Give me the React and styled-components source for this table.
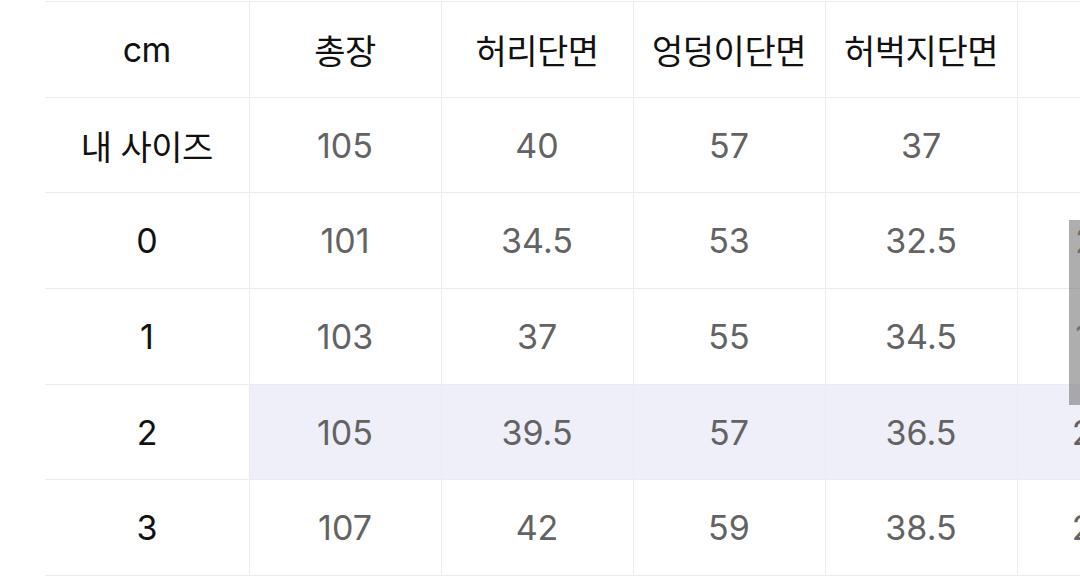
import styled, { createGlobalStyle } from "styled-components";

const GlobalStyle = createGlobalStyle`
  html, body {
    margin: 0;
    padding: 0;
    background: #fff;
    overflow: hidden;
  }
  body {
    font-family: "Inter", "Noto Sans CJK KR", sans-serif;
  }
`;

const columns = [204, 192, 192, 192, 192, 180];

const headers = ["cm", "총장", "허리단면", "엉덩이단면", "허벅지단면", ""];

const rows = [
  { label: "내 사이즈", values: ["105", "40", "57", "37", ""] },
  { label: "0", values: ["101", "34.5", "53", "32.5", "21.5"] },
  { label: "1", values: ["103", "37", "55", "34.5", "19.5"] },
  { label: "2", values: ["105", "39.5", "57", "36.5", "23.5"], active: true },
  { label: "3", values: ["107", "42", "59", "38.5", "24.5"] },
];

export default function App() {
  return (
    <>
      <GlobalStyle />
      <Page>
        <Scroller>
          <Table>
            <colgroup>
              {columns.map((w, i) => (
                <Col key={i} $w={w} />
              ))}
            </colgroup>
            <thead>
              <tr>
                {headers.map((h, i) => (
                  <HeadCell key={i}>{h}</HeadCell>
                ))}
              </tr>
            </thead>
            <tbody>
              {rows.map((row) => (
                <tr key={row.label}>
                  <LabelCell>{row.label}</LabelCell>
                  {row.values.map((v, i) => (
                    <Cell key={i} $active={row.active}>
                      {v}
                    </Cell>
                  ))}
                </tr>
              ))}
            </tbody>
          </Table>
        </Scroller>
        <ScrollThumb />
      </Page>
    </>
  );
}

const Page = styled.div`
  position: relative;
  width: 1080px;
  height: 585px;
  overflow: hidden;
`;

const Scroller = styled.div`
  padding: 1px 0 0 45px;
  overflow: hidden;
`;

const Table = styled.table`
  border-collapse: collapse;
  table-layout: fixed;
  width: 1152px;
  border-top: 1px solid #ebebeb;

  td,
  th {
    height: 94.7px;
    padding: 0;
    text-align: center;
    vertical-align: middle;
    border-bottom: 1px solid #ebebeb;
    white-space: nowrap;
  }

  td + td,
  th + th {
    border-left: 1px solid #ebebeb;
  }
`;

const Col = styled.col`
  width: ${(p) => p.$w}px;
`;

const HeadCell = styled.th`
  font-size: 34px;
  font-weight: 400;
  color: #111;
  letter-spacing: -0.5px;
`;

const LabelCell = styled.td`
  font-size: 34px;
  font-weight: 400;
  color: #111;
  letter-spacing: -0.5px;
  background: #fff;
`;

const Cell = styled.td`
  font-size: 34px;
  font-weight: 400;
  color: #636363;
  background: ${(p) => (p.$active ? "#efeff9" : "#fff")};
`;

const ScrollThumb = styled.div`
  position: absolute;
  left: 1069px;
  top: 220px;
  width: 12px;
  height: 185px;
  background: rgba(120, 120, 120, 0.6);
`;
